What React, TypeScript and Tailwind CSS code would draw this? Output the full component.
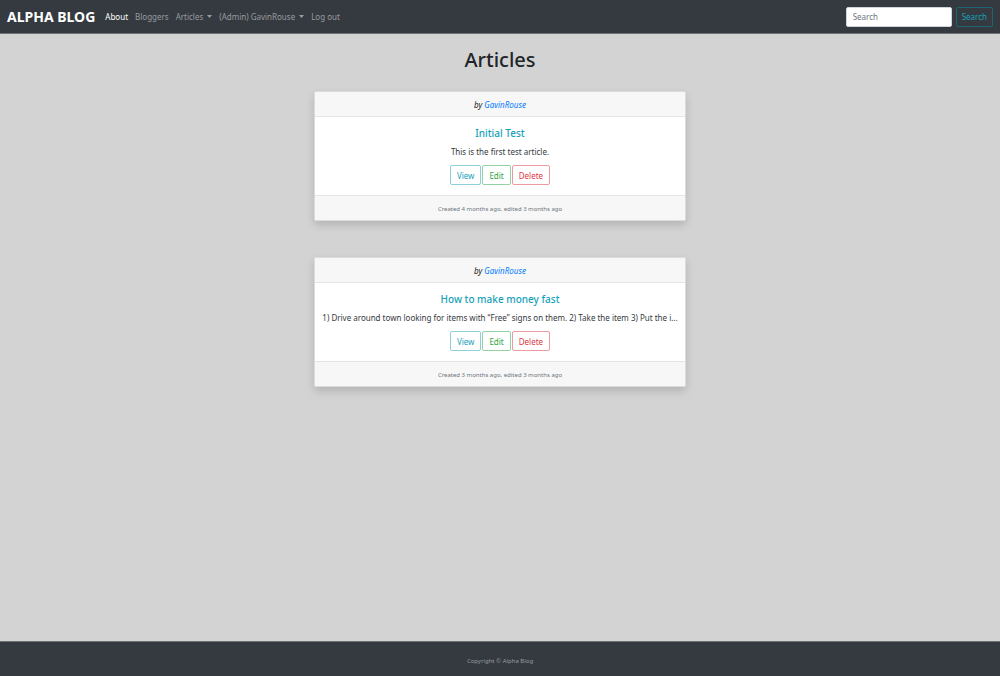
type Article = {
  author: string;
  title: string;
  summary: string;
  dates: string;
};

const articles: Article[] = [
  {
    author: 'GavinRouse',
    title: 'Initial Test',
    summary: 'This is the first test article.',
    dates: 'Created 4 months ago, edited 3 months ago',
  },
  {
    author: 'GavinRouse',
    title: 'How to make money fast',
    summary: '1) Drive around town looking for items with “Free” signs on them. 2) Take the item 3) Put the i...',
    dates: 'Created 3 months ago, edited 3 months ago',
  },
];

function Caret() {
  return (
    <svg viewBox="0 0 5 3" className="ml-1 h-[3px] w-[5px] fill-current" aria-hidden="true">
      <path d="M0 0h5L2.5 3z" />
    </svg>
  );
}

function Navbar() {
  return (
    <nav className="flex h-[34px] items-center border-b border-[#6d7074] bg-[#343a40] px-[7px] text-[#999c9f]">
      <a href="#" className="mr-[10px] text-[14px] font-bold text-white">ALPHA BLOG</a>
      <div className="flex flex-1 items-center gap-[7px]">
        <a href="#" className="text-white">About</a>
        <a href="#">Bloggers</a>
        <button type="button" className="flex items-center">Articles<Caret /></button>
        <button type="button" className="flex items-center">(Admin) GavinRouse<Caret /></button>
        <a href="#">Log out</a>
      </div>
      <form className="flex items-center gap-1" onSubmit={(e) => e.preventDefault()}>
        <input
          type="search"
          aria-label="Search"
          placeholder="Search"
          className="h-5 w-[106px] rounded-[2px] border border-[#ced4da] bg-white px-[6px] text-[#495057] placeholder:text-[#6c757d]"
        />
        <button type="submit" className="h-5 rounded-[2px] border border-[#1b6672] px-[5px] text-[#17a2b8]">Search</button>
      </form>
    </nav>
  );
}

function ArticleCard({ author, title, summary, dates }: Article) {
  return (
    <article className="flex w-[372px] max-w-full flex-col rounded-[2px] border border-[#dcdcdc] bg-white text-center shadow-[0_4px_8px_rgba(0,0,0,0.15)]">
      <header className="flex h-[25px] items-center justify-center gap-[2px] border-b border-[#e4e4e4] bg-[#f7f7f7] pt-[2px] italic">
        by <a href="#" className="text-[#007bff]">{author}</a>
      </header>
      <div className="px-1 pt-[9px] pb-[10px]">
        <h2 className="mb-[5px] text-[10px] leading-[14px] font-medium text-[#17a2b8]">
          <a href="#">{title}</a>
        </h2>
        <p className="mb-[7px] leading-[13px] text-[#343a40]">{summary}</p>
        <div className="flex justify-center gap-[1px]">
          <button type="button" className="h-5 rounded-[2px] border border-[#8bd0db] px-[6px] pt-[2px] text-[#17a2b8]">View</button>
          <button type="button" className="h-5 rounded-[2px] border border-[#93d3a2] px-[6px] pt-[2px] text-[#28a745]">Edit</button>
          <button type="button" className="h-5 rounded-[2px] border border-[#ed9aa2] px-[6px] pt-[2px] text-[#dc3545]">Delete</button>
        </div>
      </div>
      <footer className="flex h-[25px] items-center justify-center border-t border-[#e4e4e4] bg-[#f7f7f7] pt-[2px] text-[6px] text-[#6c757d]">
        {dates}
      </footer>
    </article>
  );
}

export default function App() {
  return (
    <div className="flex min-h-screen flex-col bg-[#d3d3d3] font-['Noto_Sans','Open_Sans',sans-serif] text-[8px] leading-[12px] text-[#212529]">
      <Navbar />
      <main className="flex flex-1 flex-col items-center px-4">
        <h1 className="mt-[13px] mb-[18px] text-[20px] leading-[26px] font-medium">Articles</h1>
        <div className="flex max-w-full flex-col items-center gap-9">
          {articles.map((article) => (
            <ArticleCard key={article.title} {...article} />
          ))}
        </div>
      </main>
      <footer className="flex h-[35px] items-center justify-center border-t border-[#6d7074] bg-[#343a40] pt-1 text-[6px] text-[#999c9f]">
        Copyright © Alpha Blog
      </footer>
    </div>
  );
}
